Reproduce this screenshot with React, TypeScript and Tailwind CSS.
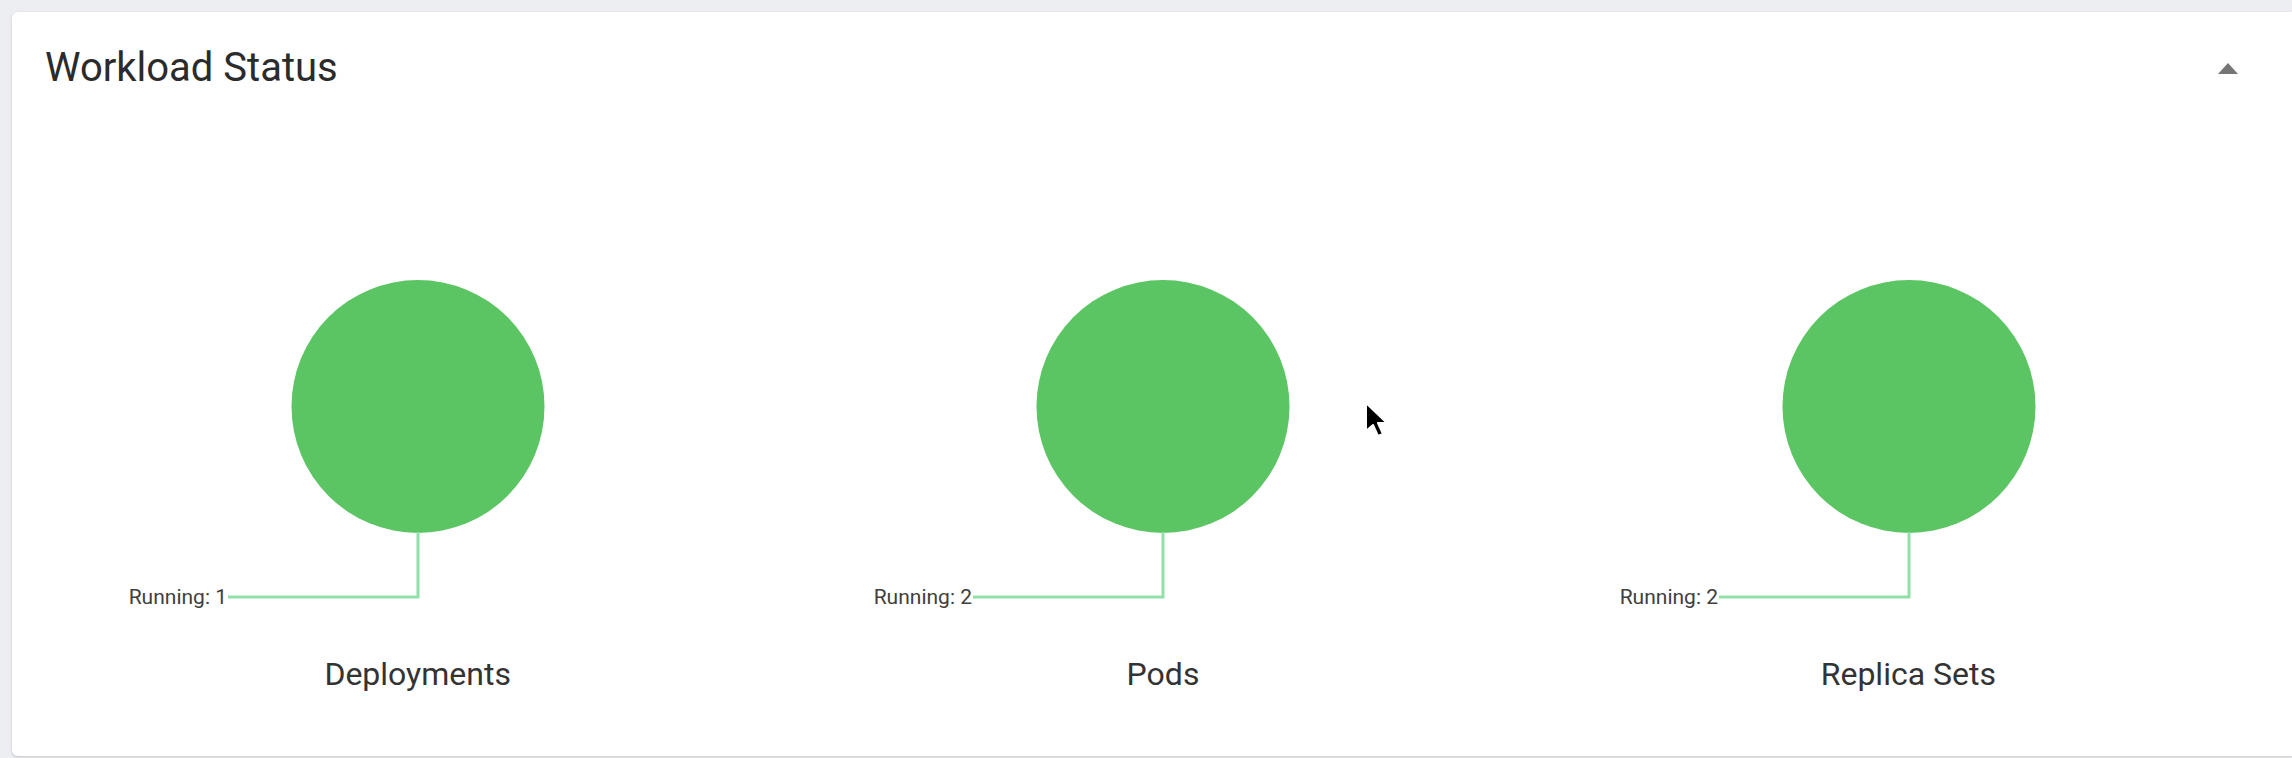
import React from "react";

const items = [
  { name: "Deployments", running: 1 },
  { name: "Pods", running: 2 },
  { name: "Replica Sets", running: 2 },
];

function StatusPie({ running }: { running: number }) {
  // column is ~745px wide, circle sits in the middle
  const cx = 373;
  return (
    <svg width="745" height="562" viewBox="0 0 745 562" className="block">
      <circle cx={cx} cy={314.5} r={126.5} fill="#5cc563" />
      <polyline
        points={`${cx},440 ${cx},505 ${cx - 190},505`}
        fill="none"
        stroke="#91e0a9"
        strokeWidth="3"
      />
      <text
        x={cx - 191}
        y={512}
        textAnchor="end"
        fontSize="21"
        fill="#404040"
        fontFamily="Roboto, 'Liberation Sans', sans-serif"
      >
        Running: {running}
      </text>
    </svg>
  );
}

export default function App() {
  return (
    <div className="relative h-[758px] w-full overflow-hidden bg-[#eceef1] pt-3 pl-3 font-['Roboto',sans-serif]">
      <div className="flex h-[744px] flex-col rounded-l-md bg-white shadow-[0_1px_3px_rgba(0,0,0,0.18)]">
        <div className="flex items-center justify-between pt-8 pl-[33px] pr-[54px]">
          <h2 className="text-[40px] leading-[48px] font-normal text-[#2b2b2b]">Workload Status</h2>
          <svg width="20" height="11" viewBox="0 0 20 11">
            <path d="M0 11 L10 0 L20 11 Z" fill="#757575" />
          </svg>
        </div>

        <div className="grid grid-cols-3 pl-[33px] pr-[11px]">
          {items.map((it) => (
            <div key={it.name} className="flex flex-col items-center">
              <StatusPie running={it.running} />
              <div className="text-[32px] leading-[40px] text-[#333333]">{it.name}</div>
            </div>
          ))}
        </div>
      </div>

      {/* mouse pointer captured in the screenshot */}
      <svg
        className="absolute left-[1362px] top-[400px]"
        width="30"
        height="40"
        viewBox="0 0 30 40"
      >
        <path
          d="M4 3 L4 31 L11 25 L16 36 L21 34 L16 23 L25 23 Z"
          fill="#000"
          stroke="#fff"
          strokeWidth="2"
          strokeLinejoin="round"
        />
      </svg>
    </div>
  );
}
